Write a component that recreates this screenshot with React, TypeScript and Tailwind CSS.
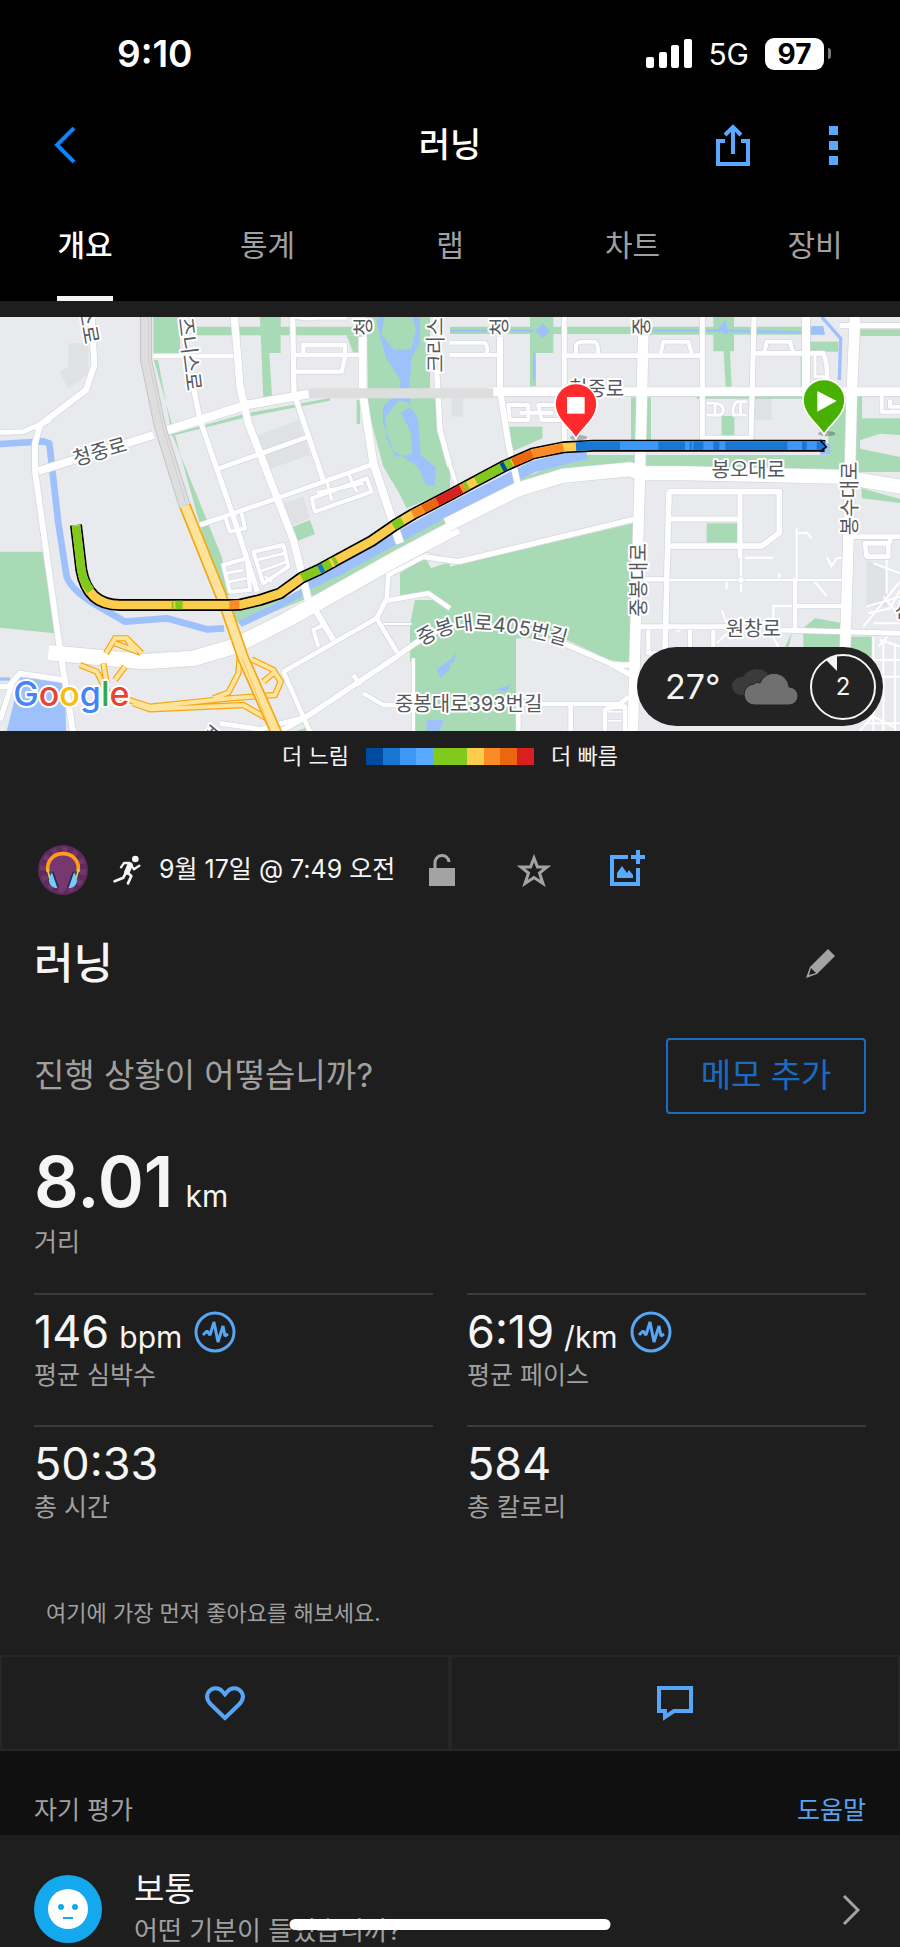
import React from 'react';

type Road = [d: string, width: number];
type Segment = [d: string, color: string];

const tabs = ['개요', '통계', '랩', '차트', '장비'];

const paceColors = [
  'bg-[#004a9f]',
  'bg-[#1976d2]',
  'bg-[#3f97f5]',
  'bg-[#57aaff]',
  'bg-[#82c91e]',
  'bg-[#82c91e]',
  'bg-[#fccc4c]',
  'bg-[#fb8b27]',
  'bg-[#eb670f]',
  'bg-[#d8211f]',
];

const stats = [
  { value: '146', unit: 'bpm', label: '평균 심박수', chart: true },
  { value: '6:19', unit: '/km', label: '평균 페이스', chart: true },
  { value: '50:33', unit: '', label: '총 시간', chart: false },
  { value: '584', unit: '', label: '총 칼로리', chart: false },
];

// Map geometry. The east half is drawn in its own group, shifted by 1350.
const westParks = [
  'M460 21h80v108h-80z',
  'M590 50h490v26h-490z',
  'M1040 76h50v54h-30z',
  'M780 21h62v108h-34l8 130-26 6z',
  'M1100 21h190v219h10l50 240v60l-130 55-25-50-45-75-45-170z',
  'M462 150h12l41 220 150 370 25 115-30 5z',
  'M510 374l230-64 250-46v8l-246 48-230 58z',
  'M1070 270h10v72h-10z',
  'M0 725h128l37 245-165-17z',
  'M870 655l60-25 15 42-60 24z',
  'M690 905l170-45 490-250v70l-440 190-190 75z',
  'M1200 790l75-50 18 35 57-20v144l-65-48-85 12z',
  'M1245 870h105v393h-105v-190l-15-20v-110z',
  'M890 1263l30-10v10z',
];

const eastParks = [
  'M0 50h550v22h-550z',
  'M240 21h70v108h-52v100h-18z',
  'M600 50h500v24h-500z',
  'M790 21h62v103h-12l5 106h-18l-6-106h-31z',
  'M1052 130h12v100h-12z',
  'M1080 95h85v30h-85z',
  'M1225 58h125v20h-125z',
  'M165 350h112v35l-92 40z',
  'M543 262h60v130h-60z',
  'M740 258h440v8h-440z',
  'M0 610l200-100 200-75h790v80l-490-36-360 2-160 60-180 100z',
  'M815 318h38v62h-38z',
  'M1135 262h55v180h-55z',
  'M1222 258h14v67h114v50l-60-4-60 20v25l120 25v45h-135z',
  'M1235 535l115 32v12l-115-14z',
  'M0 770l550-130-10 420-60-10-140-65-142 0v278h-198z',
  'M770 640h95v58h-95z',
  'M1060 1012v-58l35-29 85 15v72z',
  'M1200 980h65v60h-65z',
  'M1005 1010l20-40-8 40z',
];

const westWater = [
  'M1130 21h25l-12 50 40 50 50-5 15-55-10-40h22v80l-25 40-8 100 5 40-35-10-40 50v60l30 60 50-10-5-65-30-60 30-15 22 35 8 110 45 35-3 55h-25l-25-55-75-50-30-80v-50l50-50 3-30-45-70-22-80z',
  'M20 1263l40-160 135 10 3 150z',
  'M1310 1078l40-30v30l-30 26z',
  'M1280 1230l50 0-10 33h-40z',
];

const eastWater = [
  'M278 40l22 22-22 22-22-22z',
  'M828 28l6 46-32-14z',
  'M1085 48h35l5 26h-40z',
  'M1110 400h30v34h-30z',
  'M0 1050l18-20-4 25-14 8z',
  'M130 1140l54-16-14 20z',
];

const westRoads: Road[] = [
  ['M275 21L283 165 258 240 120 345 105 400V483L180 1020 220 1270', 18],
  ['M0 368L70 365 150 330', 14],
  ['M115 483L460 375', 24],
  ['M500 362L740 285 925 252', 26],
  ['M580 230L600 330 700 620 772 845', 16],
  ['M703 21L720 230 745 340 880 690 925 870', 22],
  ['M878 21L882 250 970 510', 16],
  ['M1088 80V250L1120 460 1200 700', 24],
  ['M460 138H700', 13],
  ['M885 135H1088', 13],
  ['M885 185H1025L1035 140V105H910V130', 13],
  ['M885 21Q920 30 950 24H1040', 10],
  ['M650 478L925 380', 14],
  ['M600 645L830 565 1120 462', 14],
  ['M1310 180L1320 360 1350 470', 16],
  ['M935 565L1100 505 1115 545 945 605Z', 12],
  ['M980 510L995 570M1045 490L1070 545M950 548L1090 520', 10],
  ['M675 620L690 665 735 655 725 610', 12],
  ['M670 765L740 745 750 840 690 845Z', 12],
  ['M680 790L730 780M685 815L740 805', 9],
  ['M760 725L850 705 865 770 790 820Z', 12],
  ['M770 750L855 730M780 785L860 755M795 800L815 815', 9],
  ['M940 890L1000 990', 18],
  ['M970 945L940 960 955 1010', 12],
  ['M850 1085L1130 925 1192 1028', 14],
  ['M850 1085L932 1270', 14],
  ['M1130 925L1160 865 1165 795 1280 735 1350 755', 14],
  ['M1160 872L1285 850 1350 895', 14],
  ['M820 1275L920 1220 1190 1040 1245 1000 1350 940', 16],
  ['M1060 1095L1080 1125', 14],
  ['M1090 1150L1150 1185H1250', 13],
  ['M660 1240L780 1258 920 1220', 14],
  ['M1240 1045V1270', 10],
  ['M1150 942H1235', 6],
  ['M0 1130H25L60 1090 190 1110M40 1110L0 1230', 16],
  ['M145 1028L430 1055 580 1045 700 1010 860 930 1200 740 1370 650', 46],
];

const eastRoads: Road[] = [
  ['M150 80V240L175 400 205 530', 18],
  ['M343 21V400', 15],
  ['M757 21V385H903L912 21', 15],
  ['M1068 21V240', 24],
  ['M0 135H150M343 137H757M905 130H1120Q1135 160 1130 235', 14],
  ['M0 98H105Q115 110 110 130', 12],
  ['M378 130V105Q382 95 400 95H435Q445 100 445 130', 12],
  ['M632 130L640 95H715L725 130', 12],
  ['M943 130L950 95H1020L1030 130', 12],
  ['M1095 135V200H1125', 9],
  ['M1170 47H1350', 16],
  ['M115 245H1350', 26],
  ['M175 285H235V330H180ZM265 285H330V330H275ZM210 308H310', 12],
  ['M770 280H785Q820 280 820 300T785 315H770M795 285V312M890 275H860Q845 290 850 315H890M872 275V312', 9],
  ['M1295 255V305H1350M1320 270V290H1350', 12],
  ['M0 465L20 530', 12],
  ['M25 755L550 628M-80 740L25 755', 16],
  ['M580 75L570 480 548 1270', 32],
  ['M655 545H988V668L935 708H660M657 545L645 1030', 17],
  ['M870 545V745M660 627H868', 15],
  ['M580 808H650', 13],
  ['M660 810H1180', 7],
  ['M1035 805V955M1035 888H1190', 14],
  ['M565 950H840M990 960L1350 970', 15],
  ['M595 960V1030H700M720 960V1030M790 960V1030', 13],
  ['M340 1000L480 1060 550 1100M480 1065H550', 16],
  ['M210 1182H510L535 1160M205 1263V1182M362 1185V1270M465 1270V1200Q480 1188 525 1190V1270', 14],
  ['M475 1205H515M475 1232H515', 6],
  ['M1200 680H1350M1245 700H1315V740H1250ZM1320 680V700', 14],
  ['M1215 21L1205 260 1195 700 1185 1030', 32],
  ['M-10 645L200 540 340 497 540 478 570 490 700 490 1170 500 1370 533', 42],
];

const eastAlleys =
  'M873 700V845M885 743H970M1040 655V810M1040 670L1070 668 1085 685M830 810V838M988 790V808M1090 810L1130 858M1130 740L1145 768 1160 745 1180 743M970 935V888H1030M815 900L830 940M680 965L690 960M800 1000L830 970M960 965L985 1010M1270 760L1350 790M1250 890L1350 860M1255 910L1320 895 1350 840M1240 950L1350 815M1300 860L1350 920M1270 940H1350M1310 750V850M1270 980V1263M1300 1000V1263M1335 1000V1263M1270 1050H1350M1270 1100H1350M1290 990L1350 1010M1250 1240H1350M1260 1215L1340 1255M1230 1263L1270 1215M1285 1010L1330 960';

const ramps =
  'M425 1030L380 985H345L318 1030M345 1000L400 1020 380 985M240 1065L290 1085 325 1150 450 1190 690 1165 825 1155 842 1115 820 1080 755 1048M720 1030L715 1090 685 1148 640 1165M310 1060L320 1120M345 1110L375 1070M400 1180L450 1198 730 1185 800 1225M790 1115L820 1090';

const routePath =
  'M228 645L244 780Q262 885 360 885H690L720 884 780 870 840 850 905 803 960 778 1010 750 1115 693 1185 645 1240 612 1350 555 1400 528 1515 467 1600 430 1690 412 1780 407H2462L2475 408';

const routeSegments: Segment[] = [
  ['M228 647L244 780Q250 815 272 842', '#82c91e'],
  ['M515 885h6M526 885h22', '#82c91e'],
  ['M688 885L718 884', '#fb8b27'],
  ['M905 803L960 778 1010 750', '#82c91e'],
  ['M958 779L970 773', '#1976d2'],
  ['M992 760L1000 756', '#fccc4c'],
  ['M1180 648L1207 632', '#82c91e'],
  ['M1238 613L1270 597', '#fb8b27'],
  ['M1270 597L1312 575', '#eb670f'],
  ['M1312 575L1350 555 1384 537', '#d8211f'],
  ['M1384 537L1394 531', '#fb8b27'],
  ['M1394 531L1404 526', '#82c91e'],
  ['M1428 513L1515 467 1535 458', '#82c91e'],
  ['M1505 473L1516 467', '#004a9f'],
  ['M1538 457L1598 431', '#eb670f'],
  ['M1598 431L1690 412', '#fb8b27'],
  ['M1728 410L1780 407H2462L2475 408', '#1976d2'],
  ['M1860 407h115M2055 407h14M2075 407h5M2110 407h30M2158 407h18M2362 407h44M2420 407h30', '#3f97f5'],
];

const Roads: React.FC<{ roads: Road[] }> = ({ roads }) => (
  <g fill="none" strokeLinejoin="round">
    {roads.map(([d, w]) => (
      <path key={d} d={d} stroke="#d3d6db" strokeWidth={w + 4} />
    ))}
    {roads.map(([d, w]) => (
      <path key={d} d={d} stroke="#fff" strokeWidth={w} />
    ))}
  </g>
);

const Pin: React.FC<{ x: number; y: number; color: string; children: React.ReactNode }> = ({ x, y, color, children }) => (
  <g transform={`translate(${x} ${y})`}>
    <ellipse cx="8" cy="100" rx="26" ry="8" fill="#000" opacity=".25" />
    <path
      d="M0 103C-12 76-63 46-63 0A63 63 0 0 1 63 0C63 46 12 76 0 103Z"
      fill={color}
      stroke="#fff"
      strokeWidth="5"
    />
    {children}
  </g>
);

const RouteMap: React.FC = () => (
  <svg
    viewBox="0 21 2700 1242"
    className="block w-full font-['Inter','Noto_Sans_CJK_KR',sans-serif]"
    role="img"
    aria-label="경로 지도"
  >
    <rect y="21" width="2700" height="1242" fill="#e8eaed" />
    <g fill="#e0e1e5">
      <path d="M205 100h60v90l-60 48-25-50 25-20z" />
      <path d="M765 380l130-50 35 105-130 45z" />
      <path d="M850 580l60-20 20 65-60 25z" />
      <path d="M1355 265h35v55h-35z" />
      <path d="M2265 265h50v65h-50z" />
      <path d="M2600 750l60 30v110h-60z" />
    </g>
    <g fill="#a8dab5">
      {westParks.map((d) => <path key={d} d={d} />)}
      <g transform="translate(1350 0)">
        {eastParks.map((d) => <path key={d} d={d} />)}
      </g>
    </g>
    <g fill="#9ec1fb">
      {westWater.map((d) => <path key={d} d={d} />)}
      <g transform="translate(1350 0)">
        {eastWater.map((d) => <path key={d} d={d} />)}
      </g>
    </g>
    <g fill="none" stroke="#9ec1fb" strokeLinejoin="round">
      <path d="M0 402L130 394 148 400 175 640 200 800Q215 840 280 880L375 935 500 925 620 958 672 955M720 942L830 890 910 845" strokeWidth="20" />
      <path d="M915 825L1010 782 1350 597 1530 505 1600 470 1760 430" strokeWidth="34" />
      <path d="M1350 62H1600M1950 62H2150L2430 68" strokeWidth="8" />
      <path d="M2465 21L2522 85 2518 210" strokeWidth="10" />
      <path d="M1602 130V210" strokeWidth="6" />
      <path d="M0 1107H30" strokeWidth="10" />
    </g>
    <path d="M1150 60l40 50 50-10 5-50-20-29h-55z" fill="#a8dab5" />

    <Roads roads={westRoads} />
    <g transform="translate(1350 0)">
      <path d={eastAlleys} fill="none" stroke="#fff" strokeWidth="6" />
      <Roads roads={eastRoads} />
      <circle cx="873" cy="810" r="10" fill="#fff" stroke="#d3d6db" strokeWidth="2" />
    </g>

    <g fill="none">
      <path d="M928 250H1480" stroke="#dedede" strokeWidth="30" />
      <path d="M438 21V150L480 350 555 590" stroke="#c4c4c4" strokeWidth="36" />
      <path d="M438 21V150L480 350 555 590" stroke="#dedede" strokeWidth="30" />
      <path d="M446 21V150L488 350 560 588" stroke="#c9c9c9" strokeWidth="2" />
      <path d={ramps} stroke="#f5a711" strokeWidth="19" />
      <path d={ramps} stroke="#fde39b" strokeWidth="12" />
      <path d="M555 588L680 900 730 1045 832 1275" stroke="#f5a711" strokeWidth="36" />
      <path d="M555 588L680 900 730 1045 832 1275" stroke="#fde39b" strokeWidth="26" />
      <path d="M725 1040L815 1270" stroke="#f8c65a" strokeWidth="3" />
    </g>

    <g fill="none" strokeLinejoin="round">
      <path d={routePath} stroke="#000" strokeWidth="36" />
      <path d={routePath} stroke="#fccc4c" strokeWidth="26" />
      {routeSegments.map(([d, color]) => (
        <path key={d} d={d} stroke={color} strokeWidth="26" />
      ))}
      <path d="M2460 390L2479 411 2466 420" stroke="#000" strokeWidth="5" />
    </g>

    <g fill="#55595e" stroke="#fff" strokeWidth="12" strokeLinejoin="round" fontSize="60" textAnchor="middle" className="[paint-order:stroke]">
      <text transform="translate(245 50) rotate(80)">스로</text>
      <text transform="translate(548 135) rotate(83)">즈니스로</text>
      <text transform="translate(305 445) rotate(-16)">청중로</text>
      <text transform="translate(1112 50) rotate(-90)">청</text>
      <text transform="translate(1330 105) rotate(-90)">크리스</text>
      <text transform="translate(1522 50) rotate(-90)">청</text>
      <text transform="translate(1948 50) rotate(-90)">중</text>
      <text x="1790" y="258">청중로</text>
      <text x="2245" y="502">봉오대로</text>
      <text transform="translate(2572 565) rotate(-90)">봉수대로</text>
      <text transform="translate(1938 810) rotate(-90)">중봉대로</text>
      <text x="2260" y="978">원창로</text>
      <text x="1406" y="1203">중봉대로393번길</text>
      <text x="2712" y="925">산</text>
      <text transform="translate(655 1290) rotate(-50)">며</text>
      <path id="street-405" d="M1262 1012Q1345 955 1440 960Q1570 968 1700 1008" fill="none" stroke="none" />
      <text>
        <textPath href="#street-405" startOffset="50%">중봉대로405번길</textPath>
      </text>
    </g>

    <Pin x={1728} y={283} color="#ff2a2c">
      <path d="M-27-22h53v50h-53z" fill="#fff" />
    </Pin>
    <Pin x={2472} y={271} color="#48b000">
      <path d="M-20-28L38 2-20 34z" fill="#fff" />
    </Pin>

    <text x="40" y="1187" fontSize="102" strokeWidth="12" strokeLinejoin="round" className="font-['Inter',sans-serif] font-medium [paint-order:stroke]" stroke="#fff">
      <tspan fill="#4285f4">G</tspan>
      <tspan fill="#ea4335">o</tspan>
      <tspan fill="#fbbc05">o</tspan>
      <tspan fill="#4285f4">g</tspan>
      <tspan fill="#34a853">l</tspan>
      <tspan fill="#ea4335">e</tspan>
    </text>
  </svg>
);

const Weather: React.FC = () => (
  <div className="absolute bottom-[5px] right-[17px] flex h-[79px] w-[246px] items-center rounded-full bg-[#232323] pl-7 pr-[7px] text-[#f5f5f5]">
    <span className="text-[34px] leading-10">27°</span>
    <svg viewBox="0 0 66 38" className="ml-auto mr-3 h-[38px] w-[66px]">
      <path d="M9 27a9 9 0 0 1 0-18h2A16 16 0 0 1 38 8v19z" fill="#3b3b3b" />
      <path d="M23 37a10.5 10.5 0 0 1-1-21 5 5 0 0 1 6-1 15 15 0 0 1 29 4 8.500 8.500 0 0 1 0 18z" fill="#6f6f6f" stroke="#232323" />
    </svg>
    <div className="relative flex size-[66px] items-center justify-center">
      <svg viewBox="0 0 66 66" className="absolute inset-0">
        <circle cx="33" cy="33" r="32" fill="none" stroke="#f5f5f5" strokeWidth="2" />
        <path d="M16 6L27 1V17z" fill="#f5f5f5" />
      </svg>
      <span className="text-[24px]">2</span>
    </div>
  </div>
);

const HeartRateIcon: React.FC = () => (
  <svg viewBox="0 0 42 42" className="size-[42px]" fill="none" stroke="#57a5f5">
    <circle cx="21" cy="21" r="19" strokeWidth="3" />
    <path d="M9 24L13 20 16 24 20 11 24 31 29 15 31 25 34 23" strokeWidth="3" strokeLinejoin="bevel" />
  </svg>
);

const Header: React.FC = () => (
  <header className="bg-black text-white">
    <div className="flex h-[107px] items-center justify-between pl-[117px] pr-[69px]">
      <span className="text-[37px] font-semibold">9:10</span>
      <div className="flex items-center">
        <svg viewBox="0 0 46 29" className="mr-4 h-[29px] w-[46px]" fill="#fff">
          <rect y="18" width="8" height="11" rx="2" />
          <rect x="13" y="13" width="8" height="16" rx="2" />
          <rect x="25" y="6" width="8" height="23" rx="2" />
          <rect x="38" width="8" height="29" rx="2" />
        </svg>
        <span className="mr-4 text-[30px] leading-8">5G</span>
        <span className="flex h-8 w-[59px] items-center justify-center rounded-[9px] bg-white text-[28px] font-bold text-black">97</span>
        <span className="ml-1 h-[11px] w-[3px] rounded-r-full bg-[#7c7c7c]" />
      </div>
    </div>

    <div className="grid h-[76px] grid-cols-3 items-center px-[54px]">
      <button type="button" aria-label="뒤로" className="justify-self-start">
        <svg viewBox="0 0 22 36" className="h-9 w-[22px]" fill="none" stroke="#0a84ff" strokeWidth="4">
          <path d="M20 1L3 18 20 35" />
        </svg>
      </button>
      <h1 className="text-center text-[34px] font-medium leading-10">러닝</h1>
      <div className="flex items-center justify-end gap-[79px] pr-2">
        <button type="button" aria-label="공유">
          <svg viewBox="0 0 34 42" className="h-[42px] w-[34px]" fill="none" stroke="#57aaff" strokeWidth="4">
            <path d="M9 17H2V40H32V17H25M17 30V4M9 11L17 3 25 11" />
          </svg>
        </button>
        <button type="button" aria-label="더 보기" className="flex flex-col gap-[6px]">
          <span className="size-[9px] bg-[#57aaff]" />
          <span className="size-[9px] bg-[#57aaff]" />
          <span className="size-[9px] bg-[#57aaff]" />
        </button>
      </div>
    </div>

    <nav className="flex justify-between px-[57px]">
      {tabs.map((tab, i) => (
        <button
          key={tab}
          type="button"
          className={
            i === 0
              ? 'h-[118px] w-14 whitespace-nowrap border-b-[5px] border-[#f5f5f5] pt-3 text-[30px] font-medium text-white'
              : 'h-[118px] w-14 whitespace-nowrap border-b-[5px] border-transparent pt-3 text-[30px] text-[#a0a0a0]'
          }
        >
          {tab}
        </button>
      ))}
    </nav>
  </header>
);

const ActivityInfo: React.FC = () => (
  <div className="flex h-[50px] items-center px-[38px]">
    <svg viewBox="0 0 150 150" className="size-[50px]">
      <circle cx="75" cy="75" r="75" fill="#5f2b5c" />
      <circle cx="75" cy="75" r="60" fill="none" stroke="#74376d" strokeWidth="18" strokeDasharray="15 16" />
      <path d="M38 84C24 40 50 30 75 30S126 40 112 84L84 132Q75 150 66 132Z" fill="#76386f" />
      <path d="M30 80C18 8 132 8 120 80" fill="none" stroke="#ff9c1a" strokeWidth="11" />
      <path d="M28 72L36 102M122 72L114 102" stroke="#c9dc4a" strokeWidth="5" />
      <path d="M44 80L60 127Q54 132 44 126 22 108 44 80ZM106 80L90 127Q96 132 106 126 128 108 106 80Z" fill="#74cdf8" />
      <path d="M44 80L60 127M106 80L90 127" stroke="#252a55" strokeWidth="5" />
    </svg>
    <svg viewBox="250 45 82 90" className="ml-[25px] h-[30px] w-[28px]" fill="none" stroke="#f5f5f5" strokeLinejoin="round" strokeLinecap="round">
      <circle cx="316" cy="57" r="10" fill="#f5f5f5" stroke="none" />
      <path d="M300 75L291 96" strokeWidth="17" />
      <path d="M298 69L282 69 273 82M304 76L312 88 328 77" strokeWidth="7" />
      <path d="M293 98L304 108 294 130M288 97L280 113 254 124" strokeWidth="8" />
    </svg>
    <span className="ml-[18px] whitespace-nowrap text-[25px]">9월 17일 @ 7:49 오전</span>
    <button type="button" aria-label="공개 설정" className="ml-[34px]">
      <svg viewBox="0 0 26 32" className="h-8 w-[26px]">
        <path d="M0 14H26V32H0z" fill="#a3a3a3" />
        <path d="M6 15V9A7 7 0 0 1 20 8" fill="none" stroke="#a3a3a3" strokeWidth="3" />
      </svg>
    </button>
    <button type="button" aria-label="즐겨찾기" className="ml-[62px]">
      <svg viewBox="0 0 34 33" className="h-[33px] w-[34px]" fill="none" stroke="#a3a3a3" strokeWidth="3">
        <path d="M17 4L20.5 13H30L22.5 19 26 29.5 17 23.5 8 29.5 11.5 19 4 13H13.5Z" />
      </svg>
    </button>
    <button type="button" aria-label="사진 추가" className="ml-[59px] pb-1">
      <svg viewBox="0 0 36 36" className="size-9">
        <path d="M18 7H2V34H28V18" fill="none" stroke="#57aaff" strokeWidth="4" />
        <path d="M28 0V14M21 7H35" stroke="#57aaff" strokeWidth="4" />
        <path d="M7 28V23L12 16 17 23 19 20 23 25V28Z" fill="#57aaff" />
      </svg>
    </button>
  </div>
);

const App: React.FC = () => {
  return (
    <div className="relative bg-[#1e1e1e] font-['Inter','Noto_Sans_CJK_KR',sans-serif] text-[#f5f5f5]">
      <Header />

      <main>
        <section className="relative mt-4">
          <RouteMap />
          <Weather />
        </section>

        <div className="flex h-[50px] items-center justify-center gap-[17px] text-[22px]">
          <span>더 느림</span>
          <div className="flex h-[17px] w-[168px]">
            {paceColors.map((color, i) => (
              <span key={i} className={`flex-1 ${color}`} />
            ))}
          </div>
          <span>더 빠름</span>
        </div>

        <section className="mt-16">
          <ActivityInfo />
          <div className="mt-11 flex h-12 items-center justify-between pl-[34px] pr-[65px]">
            <h2 className="text-[43px] font-medium leading-[48px]">러닝</h2>
            <button type="button" aria-label="이름 편집">
              <svg viewBox="0 0 29 29" className="size-[29px]">
                <path d="M22 0L29 7 11 25 0 29 4 18Z" fill="#a3a3a3" />
                <path d="M5 19L10 24 3 26Z" fill="#1e1e1e" />
              </svg>
            </button>
          </div>

          <div className="mt-[51px] flex items-center justify-between px-[34px]">
            <p className="text-[33px] text-[#a0a0a0]">진행 상황이 어떻습니까?</p>
            <button type="button" className="h-[76px] w-[200px] rounded border-2 border-[#1a6bc4] text-[33px] text-[#1a6bc4]">
              메모 추가
            </button>
          </div>
        </section>

        <section className="px-[34px] pt-8">
          <div className="flex h-[72px] items-baseline gap-3">
            <span className="text-[70px] font-semibold leading-[72px]">8.01</span>
            <span className="text-[30px]">km</span>
          </div>
          <p className="mt-1 text-[25px] leading-10 text-[#a0a0a0]">거리</p>

          <div className="mt-[31px] grid grid-cols-2 gap-x-[34px]">
            {stats.map((stat) => (
              <div key={stat.label} className="h-[132px] border-t-2 border-[#3b3b3b] pt-4">
                <div className="flex h-[42px] items-center gap-3">
                  <p className="flex items-baseline gap-[10px]">
                    <span className="text-[45px] leading-[42px]">{stat.value}</span>
                    {stat.unit && <span className="text-[30px] leading-8">{stat.unit}</span>}
                  </p>
                  {stat.chart && <HeartRateIcon />}
                </div>
                <p className="mt-1 text-[25px] leading-9 text-[#a0a0a0]">{stat.label}</p>
              </div>
            ))}
          </div>
        </section>

        <p className="mt-10 px-[46px] text-[22px] leading-8 text-[#a0a0a0]">여기에 가장 먼저 좋아요를 해보세요.</p>

        <div className="mt-[26px] grid h-24 grid-cols-2">
          <button type="button" aria-label="좋아요" className="flex items-center justify-center border-2 border-[#262626]">
            <svg viewBox="0 0 40 35" className="h-[35px] w-10" fill="none" stroke="#57a5f5" strokeWidth="4">
              <path d="M20 32L6 18.500C2 14.500 1 10 3.500 6C7 1 14 1 17.500 5.500L20 8.500L22.500 5.500C26 1 33 1 36.500 6C39 10 38 14.500 34 18.500Z" />
            </svg>
          </button>
          <button type="button" aria-label="댓글" className="flex items-center justify-center border-2 border-[#262626]">
            <svg viewBox="0 0 36 35" className="h-[35px] w-9" fill="none" stroke="#57a5f5" strokeWidth="4">
              <path d="M2 2H34V25H17L8 31V25H2Z" />
            </svg>
          </button>
        </div>

        <div className="flex h-[84px] items-end justify-between bg-[#101010] px-[34px] pb-[7px] text-[25px] leading-9">
          <h3 className="text-[#a0a0a0]">자기 평가</h3>
          <a href="#help" className="text-[#57a5f5]">도움말</a>
        </div>

        <a href="#self-evaluation" className="flex h-28 items-start overflow-hidden pl-[34px] pr-10 pt-10">
          <svg viewBox="0 0 68 68" className="size-[68px] shrink-0">
            <circle cx="34" cy="34" r="34" fill="#14a9ef" />
            <circle cx="34" cy="34" r="20" fill="#fff" />
            <circle cx="27" cy="32" r="3" fill="#14a9ef" />
            <circle cx="41" cy="32" r="3" fill="#14a9ef" />
            <path d="M29 43H39" stroke="#14a9ef" strokeWidth="2" />
          </svg>
          <div className="-mt-2 ml-8 flex-1">
            <p className="text-[33px] leading-[44px]">보통</p>
            <p className="text-[26px] leading-10 text-[#a0a0a0]">어떤 기분이 들었습니까?</p>
          </div>
          <svg viewBox="0 0 18 30" className="mt-5 h-[30px] w-[18px]" fill="none" stroke="#a3a3a3" strokeWidth="3">
            <path d="M2 1L16 15 2 29" />
          </svg>
        </a>
      </main>

      <div className="absolute bottom-[17px] left-1/2 h-[11px] w-[321px] -translate-x-1/2 rounded-full bg-white" />
    </div>
  );
};

export default App;
